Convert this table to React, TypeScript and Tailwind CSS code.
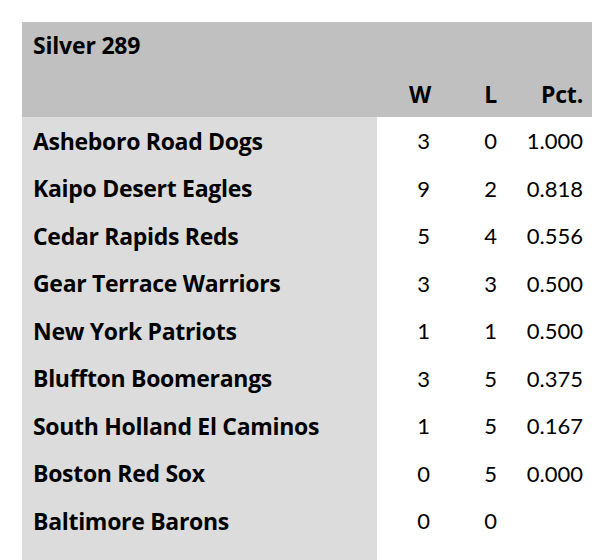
const teams = [
  { name: "Asheboro Road Dogs", w: "3", l: "0", pct: "1.000" },
  { name: "Kaipo Desert Eagles", w: "9", l: "2", pct: "0.818" },
  { name: "Cedar Rapids Reds", w: "5", l: "4", pct: "0.556" },
  { name: "Gear Terrace Warriors", w: "3", l: "3", pct: "0.500" },
  { name: "New York Patriots", w: "1", l: "1", pct: "0.500" },
  { name: "Bluffton Boomerangs", w: "3", l: "5", pct: "0.375" },
  { name: "South Holland El Caminos", w: "1", l: "5", pct: "0.167" },
  { name: "Boston Red Sox", w: "0", l: "5", pct: "0.000" },
  { name: "Baltimore Barons", w: "0", l: "0", pct: "" },
];

export default function App() {
  return (
    <div
      className="min-h-[560px] bg-white pt-[22px] px-[22px] text-black text-[22px]"
      style={{ fontFamily: "Lato, 'Open Sans', sans-serif" }}
    >
      <table className="w-[570px] border-collapse table-fixed">
        <colgroup>
          <col className="w-[355px]" />
          <col className="w-[63px]" />
          <col className="w-[67px]" />
          <col className="w-[85px]" />
        </colgroup>
        <thead className="bg-[#bfc0bf] font-['Open_Sans',sans-serif] tracking-[-0.2px]">
          <tr className="h-[47px]">
            <th colSpan={4} className="text-left font-bold text-[23px] pl-[11px]">
              Silver 289
            </th>
          </tr>
          <tr className="h-[48px] text-[23px]">
            <th></th>
            <th className="text-right font-bold pr-[9px] pt-[3px]">W</th>
            <th className="text-right font-bold pr-[10px] pt-[3px]">L</th>
            <th className="text-right font-bold pr-[9px] pt-[3px]">Pct.</th>
          </tr>
        </thead>
        <tbody>
          {teams.map((t) => (
            <tr key={t.name} className="h-[47.5px]">
              <td className="bg-[#dcdcdc] font-['Open_Sans',sans-serif] font-bold text-[23px] tracking-[-0.3px] pl-[11px] whitespace-nowrap">
                {t.name}
              </td>
              <td className="text-right pr-[10px]">{t.w}</td>
              <td className="text-right pr-[10px]">{t.l}</td>
              <td className="text-right pr-[9px]">{t.pct}</td>
            </tr>
          ))}
          <tr className="h-[20px]">
            <td className="bg-[#dcdcdc]"></td>
            <td></td>
            <td></td>
            <td></td>
          </tr>
        </tbody>
      </table>
    </div>
  );
}
